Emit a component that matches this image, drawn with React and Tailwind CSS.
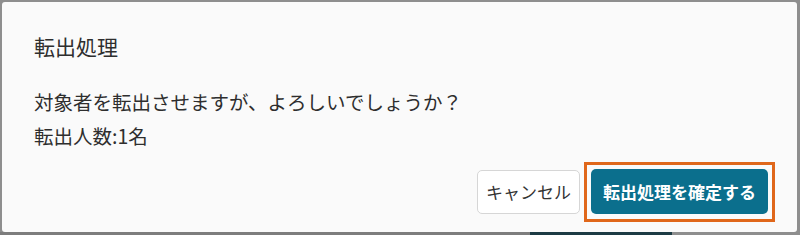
import React from 'react';

const font = { fontFamily: '"Noto Sans CJK JP", "Noto Sans", sans-serif' };

const TransferDialog = ({ count = 1, onCancel, onConfirm }) => {
  return (
    <div className="flex flex-col flex-1 bg-[#fafafa] rounded-[3px] text-[#2e2e2e]">
      <div className="pl-[32px] pt-[29px] h-[66px]">
        <h2 className="text-[21px] leading-[30px]">転出処理</h2>
      </div>

      <div className="pl-[32px] pt-[17px]">
        <p className="text-[19.5px] leading-[34px]">対象者を転出させますが、よろしいでしょうか？</p>
        <p className="text-[19.5px] leading-[34px]">転出人数:{count}名</p>
      </div>

      <div className="flex justify-end items-center gap-[4px] pr-[22px] mt-[9px]">
        <button
          className="h-[44px] w-[103px] rounded-[5px] border border-[#d6d6d6] bg-white text-[17px] text-[#333333]"
          onClick={onCancel}
        >
          キャンセル
        </button>
        {/* focus ring drawn as a square frame */}
        <div className="border-[3px] border-[#e0671a] p-[4px] pb-[5px]">
          <button
            className="block h-[45px] w-[177px] rounded-[5px] bg-[#0b6f8d] text-[17px] font-bold text-white"
            onClick={onConfirm}
          >
            転出処理を確定する
          </button>
        </div>
      </div>
    </div>
  );
};

export default function App() {
  return (
    <div className="w-[800px] h-[235px] flex flex-col bg-[#8e8e8e]" style={font}>
      <div className="flex flex-1 pl-[2px] pt-[2px] pr-[3px]">
        <TransferDialog />
      </div>
      <div className="flex h-[3px]">
        <div className="w-[530px] bg-[#7d7d7d]" />
        <div className="w-[142px] bg-[#1d3b44]" />
        <div className="flex-1 bg-[#8e8e8e]" />
      </div>
    </div>
  );
}
